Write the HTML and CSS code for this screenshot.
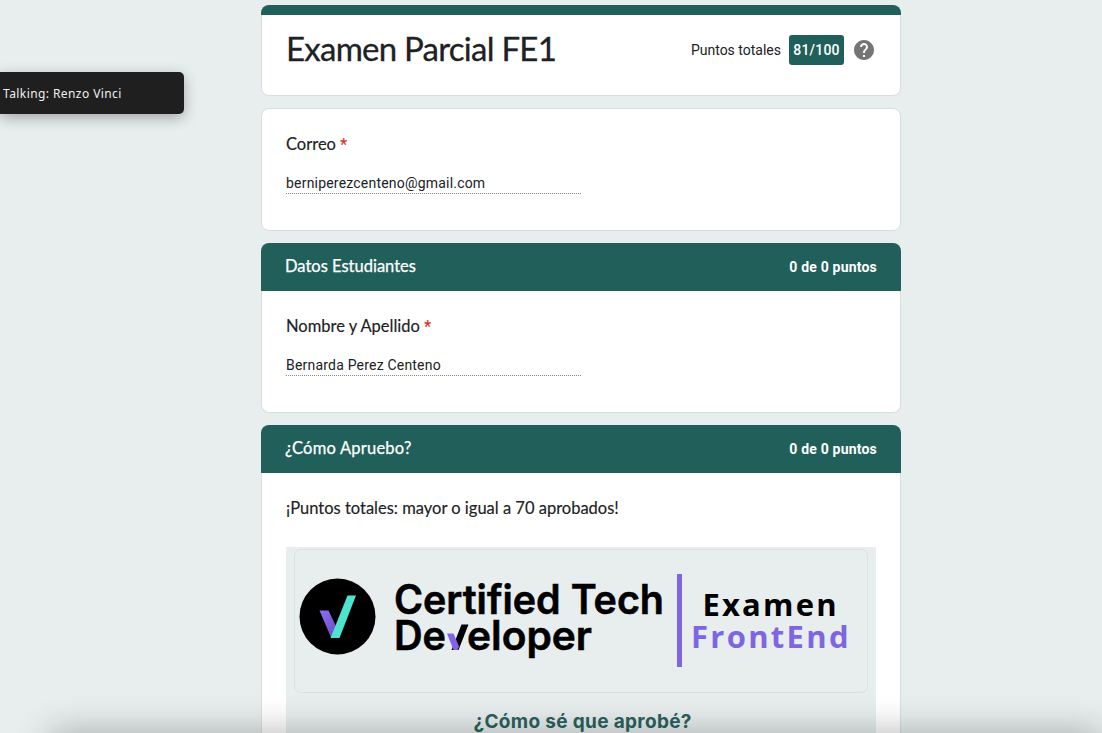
FILE: index.html
```html
<!DOCTYPE html>
<html lang="es">
<head>
<meta charset="utf-8">
<title>Examen Parcial FE1</title>
<link rel="stylesheet" href="styles.css">
</head>
<body>
<main class="form">
  <header class="card title-card">
    <h1 class="title">Examen Parcial FE1</h1>
    <div class="score">
      <span class="score-label">Puntos totales</span>
      <span class="score-badge">81/100</span>
      <svg class="help" viewBox="0 0 24 24"><path fill="#757575" d="M12 2C6.48 2 2 6.48 2 12s4.48 10 10 10 10-4.480 10-10S17.520 2 12 2zm1 17h-2v-2h2v2zm2.070-7.750l-.9.920C13.450 12.900 13 13.500 13 15h-2v-.5c0-1.100.450-2.100 1.170-2.830l1.240-1.260c.370-.360.590-.860.590-1.410 0-1.100-.9-2-2-2s-2 .9-2 2H8c0-2.210 1.790-4 4-4s4 1.790 4 4c0 .880-.360 1.680-.930 2.250z"/></svg>
    </div>
  </header>
  <section class="card question">
    <div class="label">Correo <span class="required">*</span></div>
    <div class="answer">berniperezcenteno@gmail.com</div>
  </section>
  <section class="group">
    <div class="section-head"><h2 class="section-title">Datos Estudiantes</h2><span class="points">0 de 0 puntos</span></div>
    <div class="card question attached">
      <div class="label">Nombre y Apellido <span class="required">*</span></div>
      <div class="answer">Bernarda Perez Centeno</div>
    </div>
  </section>
  <section class="group">
    <div class="section-head"><h2 class="section-title wide">¿Cómo Apruebo?</h2><span class="points">0 de 0 puntos</span></div>
    <div class="card question attached last">
      <div class="label">¡Puntos totales: mayor o igual a 70 aprobados!</div>
      <svg class="banner" width="590" height="186" viewBox="0 0 590 186">
        <defs>
          <linearGradient id="violet" x1="0" y1="0" x2="1" y2="1"><stop offset="0" stop-color="#8f70f4"/><stop offset="1" stop-color="#684ac4"/></linearGradient>
        </defs>
        <rect width="590" height="186" fill="#e8eeee"/>
        <rect x="8.5" y="2.5" width="573" height="143" rx="6" fill="none" stroke="#dbe1e1"/>
        <circle cx="51.500" cy="69.500" r="38" fill="#000"/>
        <path d="M33.500 63.500h9l9 19-6 9z" fill="url(#violet)"/>
        <path d="M61.500 48.500h8.500l-16.500 42.500h-9z" fill="#4de4cf"/>
        <g class="brand">
          <text x="108" y="66.500" textLength="270" lengthAdjust="spacingAndGlyphs">Certified Tech</text>
          <text x="108" y="103" textLength="52" lengthAdjust="spacingAndGlyphs">De</text>
          <text x="181" y="103" textLength="125" lengthAdjust="spacingAndGlyphs">eloper</text>
        </g>
        <path d="M175.500 77.500h7l-10 25.500h-7z" fill="#000"/>
        <path d="M161 86.500h6.500l5.500 13-1.500 3.500h-4z" fill="#8462e6"/>
        <rect x="391" y="27" width="5" height="93" fill="#8065e2"/>
        <text class="exam" x="416.500" y="68.500" textLength="134">Examen</text>
        <text class="exam front" x="405" y="101" textLength="157.500">FrontEnd</text>
        <text class="ask" x="187.500" y="180.500" textLength="218">¿Cómo sé que aprobé?</text>
      </svg>
    </div>
  </section>
</main>
<div class="talking">Talking: Renzo Vinci</div>
<div class="dock"><div class="dock-shadow"></div></div>
</body>
</html>
```
FILE: styles.css
```css
* { box-sizing: border-box; }
html, body { height: 100%; overflow: hidden; }
body {
  margin: 0;
  background: #e8eeee;
  color: #202124;
  font-family: Roboto, sans-serif;
}
.form {
  width: 640px;
  margin: 0 auto 0 261px;
  padding-top: 5px;
  display: flex;
  flex-direction: column;
  gap: 12px;
}
.card { background: #fff; border: 1px solid #dadce0; border-radius: 8px; }
.title-card {
  position: relative;
  height: 91px;
  padding: 18px 24px 0;
  display: flex;
  justify-content: space-between;
  align-items: flex-start;
}
.title-card::before {
  content: "";
  position: absolute;
  inset: -1px -1px auto;
  height: 10px;
  border-radius: 8px 8px 0 0;
  background: #215f5a;
}
.title, .label, .section-title { font-family: Lato, sans-serif; font-weight: 400; margin: 0; }
.title { font-size: 33px; line-height: 48px; letter-spacing: -0.75px; white-space: nowrap; -webkit-text-stroke: 0.3px; }
.score { display: flex; align-items: center; padding: 11px 0 0; }
.score-label { font-size: 14px; letter-spacing: 0; margin-right: 8px; }
.score-badge {
  width: 55px; height: 30px; line-height: 30px;
  border-radius: 3px;
  text-align: center;
  background: #215f5a; color: #fff;
  font-size: 14px; font-weight: 500; letter-spacing: 0.2px;
}
.help { width: 24px; height: 24px; margin-left: 8px; }
.question { height: 123px; padding: 23px 24px 0; }
.label { font-size: 16.5px; line-height: 24px; white-space: nowrap; -webkit-text-stroke: 0.15px; }
.required { color: #d93025; font-family: Roboto, sans-serif; font-size: 16px; }
.answer {
  width: 295px;
  height: 21px;
  margin-top: 16px;
  line-height: 20px;
  font-size: 14px;
  letter-spacing: 0.2px;
  border-bottom: 1px dotted #85888b;
}
.section-head {
  height: 48px;
  padding: 0 24px;
  display: flex;
  justify-content: space-between;
  align-items: center;
  background: #215f5a; color: #fff;
  border-radius: 8px 8px 0 0;
}
.section-title { font-size: 16.5px; line-height: 24px; padding-bottom: 2px; -webkit-text-stroke: 0.25px; }
.wide { letter-spacing: 0.22px; }
.points { font-size: 14px; font-weight: 700; letter-spacing: 0.2px; }
.attached { height: 122px; border-top: 0; border-radius: 0 0 8px 8px; }
.last { height: 260px; border-bottom: 0; border-radius: 0; }
.banner { display: block; margin-top: 27px; }
.brand { font: 600 40.5px Inter, sans-serif; stroke: #000; stroke-width: 0.6px; }
.exam { font: 700 31px "Open Sans", sans-serif; }
.front { fill: #8065e2; }
.ask { font: 700 19px Inter, sans-serif; fill: #2a625d; }
.talking {
  position: absolute;
  top: 72px; left: 0;
  width: 184px; height: 42px;
  padding-left: 3px;
  border-radius: 0 5px 5px 0;
  background: #1f1f1f; color: #efefef;
  font: 12px/43px "Noto Sans", sans-serif;
  letter-spacing: 0.42px;
  box-shadow: 0 4px 14px rgba(0, 0, 0, 0.3);
}
.dock {
  position: absolute;
  inset: auto 0 0;
  height: 60px;
  overflow: hidden;
}
.dock-shadow {
  height: 60px;
  margin: 60px 0 0 50px;
  box-shadow: 0 0 36px rgba(0, 0, 0, 0.3);
}
```
